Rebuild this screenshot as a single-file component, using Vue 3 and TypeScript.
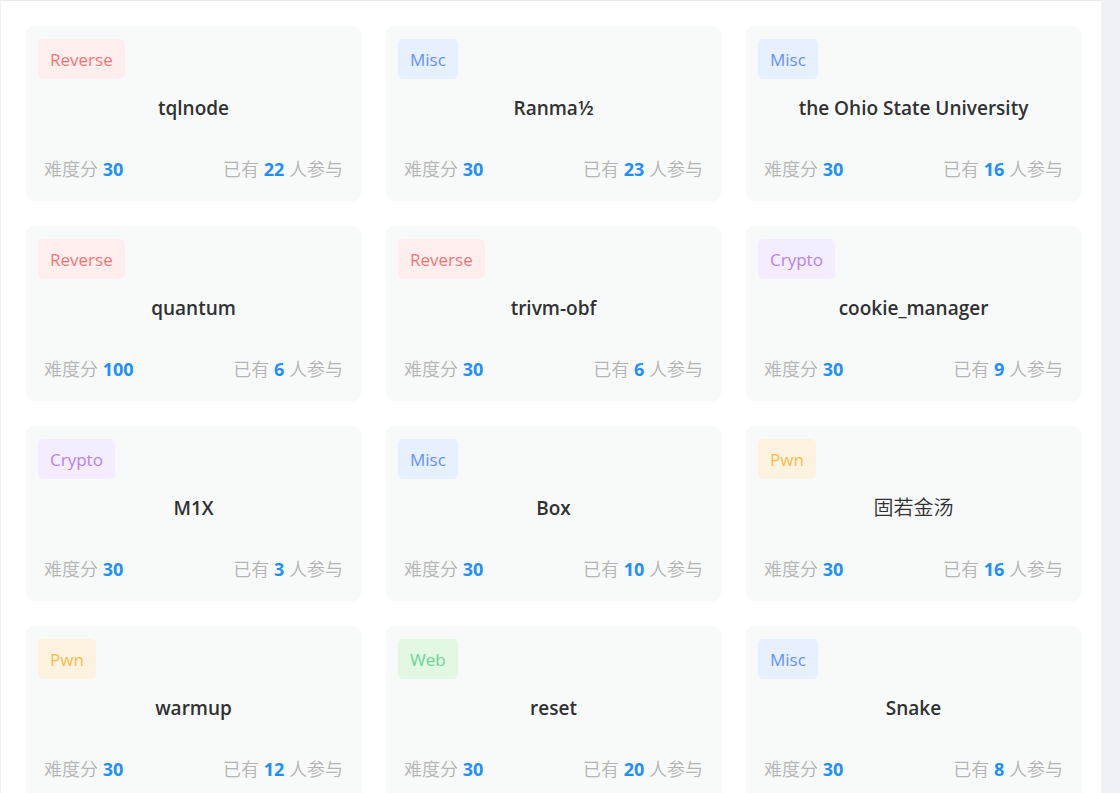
<script setup lang="ts">
type Category = 'Reverse' | 'Misc' | 'Crypto' | 'Pwn' | 'Web'

interface Challenge {
  category: Category
  title: string
  score: number
  players: number
}

const challenges: Challenge[] = [
  { category: 'Reverse', title: 'tqlnode', score: 30, players: 22 },
  { category: 'Misc', title: 'Ranma½', score: 30, players: 23 },
  { category: 'Misc', title: 'the Ohio State University', score: 30, players: 16 },
  { category: 'Reverse', title: 'quantum', score: 100, players: 6 },
  { category: 'Reverse', title: 'trivm-obf', score: 30, players: 6 },
  { category: 'Crypto', title: 'cookie_manager', score: 30, players: 9 },
  { category: 'Crypto', title: 'M1X', score: 30, players: 3 },
  { category: 'Misc', title: 'Box', score: 30, players: 10 },
  { category: 'Pwn', title: '固若金汤', score: 30, players: 16 },
  { category: 'Pwn', title: 'warmup', score: 30, players: 12 },
  { category: 'Web', title: 'reset', score: 30, players: 20 },
  { category: 'Misc', title: 'Snake', score: 30, players: 8 },
]

const isHan = (text: string): boolean => /[\u4e00-\u9fff]/.test(text)
</script>

<template>
  <main class="page">
    <ul class="grid">
      <li v-for="item in challenges" :key="item.title" class="card">
        <span class="tag" :class="item.category.toLowerCase()">{{ item.category }}</span>
        <h2 class="title" :class="{ han: isHan(item.title) }">{{ item.title }}</h2>
        <div class="stats">
          <span>难度分 <b>{{ item.score }}</b></span>
          <span>已有 <b>{{ item.players }}</b> 人参与</span>
        </div>
      </li>
    </ul>
  </main>
</template>

<style>
body {
  margin: 0;
  background: #f0f1f6;
}
</style>

<style scoped>
.page {
  box-sizing: border-box;
  min-height: 100vh;
  margin: 0 19px 0 1px;
  padding: 25px 20px 25px 25px;
  border-top: 1px solid #e9e9eb;
  background: #fff;
  font-family: 'Open Sans', 'Noto Sans CJK SC', sans-serif;
}

.grid {
  display: grid;
  grid-template-columns: repeat(3, minmax(0, 1fr));
  gap: 25px;
  margin: 0;
  padding: 0;
  list-style: none;
}

.card {
  display: flex;
  flex-direction: column;
  align-items: flex-start;
  box-sizing: border-box;
  min-height: 175px;
  padding: 13px 12px 17px;
  border-radius: 8px;
  background: #f8faf9;
}

.tag {
  padding: 1px 12px 0;
  border-radius: 5px;
  font-size: 17px;
  font-weight: 400;
  line-height: 39px;
}

.reverse {
  background: #ffeeee;
  color: #f87474;
}

.misc {
  background: #e6f0ff;
  color: #6490ff;
}

.crypto {
  background: #f4edff;
  color: #b683ea;
}

.pwn {
  background: #fdf1e0;
  color: #f5bd4c;
}

.web {
  background: #e2f8e2;
  color: #6bd598;
}

.title {
  align-self: stretch;
  margin: 14px 0 0;
  overflow: hidden;
  color: #303133;
  font-size: 19px;
  font-weight: 600;
  line-height: 30px;
  text-align: center;
  text-overflow: ellipsis;
  white-space: nowrap;
}

.title.han {
  font-size: 20px;
  font-weight: 350;
}

.stats {
  display: flex;
  align-self: stretch;
  justify-content: space-between;
  margin-top: auto;
  padding: 0 6px;
  color: #b4b4b4;
  font-size: 18px;
  font-weight: 350;
  line-height: 30px;
}

.stats b {
  color: #1e8fff;
  font-weight: 700;
}
</style>
